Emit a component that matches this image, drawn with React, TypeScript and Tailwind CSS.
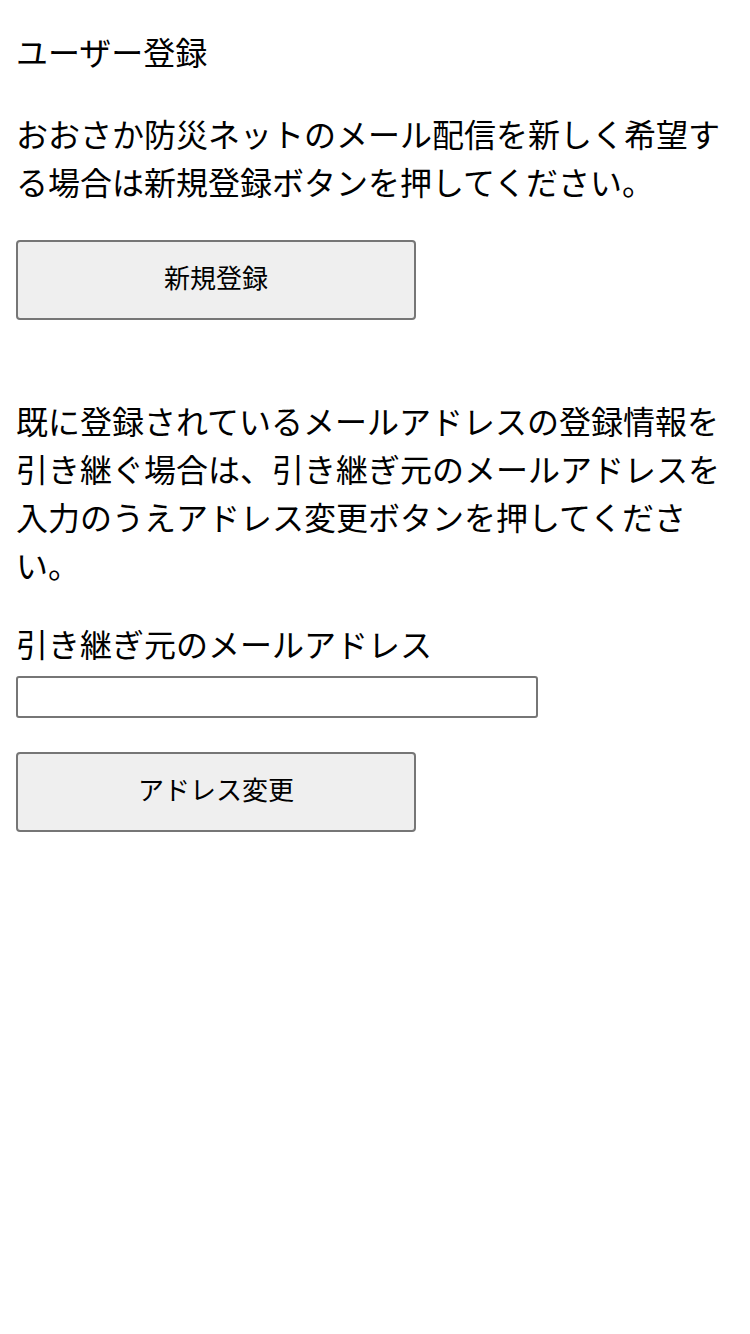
import React from 'react'

const font = { fontFamily: '"Noto Sans CJK JP", "Noto Sans", sans-serif' }

const GrayButton: React.FC<{ label: string }> = ({ label }) => (
  <button
    type="button"
    className="block w-[400px] h-[80px] pb-[7px] rounded-[4px] border-2 border-[#767676] bg-[#efefef] text-[26px] text-black"
  >
    {label}
  </button>
)

const App: React.FC = () => {
  return (
    <div className="min-h-[1334px] bg-white px-4 text-black" style={font}>
      <div className="pt-[27px] text-[32px] leading-[48px]">ユーザー登録</div>

      <p className="mt-[34px] text-[32px] leading-[48px]">
        おおさか防災ネットのメール配信を新しく希望する場合は新規登録ボタンを押してください。
      </p>
      <div className="mt-[35px]">
        <GrayButton label="新規登録" />
      </div>

      <p className="mt-[76px] text-[32px] leading-[48px]">
        既に登録されているメールアドレスの登録情報を引き継ぐ場合は、引き継ぎ元のメールアドレスを入力のうえアドレス変更ボタンを押してください。
      </p>

      <div className="mt-[31px] text-[32px] leading-[48px]">引き継ぎ元のメールアドレス</div>
      <input
        type="text"
        className="mt-[9px] block w-[522px] h-[42px] rounded-[3px] border-2 border-[#767676] bg-white px-2 text-[24px]"
      />
      <div className="mt-[34px]">
        <GrayButton label="アドレス変更" />
      </div>
    </div>
  )
}

export default App
